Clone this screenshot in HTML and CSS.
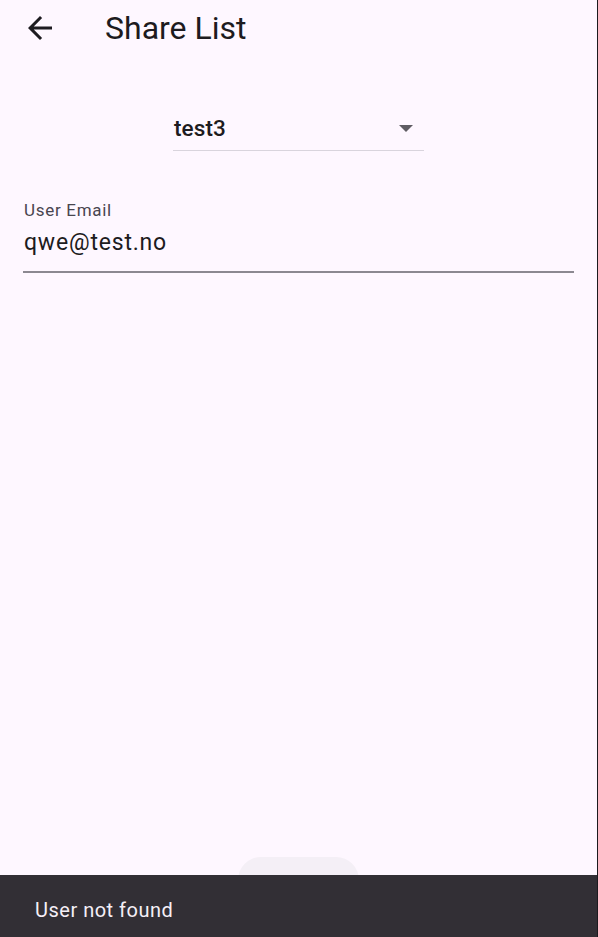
FILE: index.html
```html
<!DOCTYPE html>
<html lang="en">
<head>
<meta charset="utf-8">
<title>Share List</title>
<link rel="stylesheet" href="styles.css">
</head>
<body>
<div class="screen">
  <header class="appbar">
    <button class="back" aria-label="Back">
      <svg viewBox="0 0 24 24" width="36" height="36"><path d="M20 11H7.83l5.59-5.59L12 4l-8 8 8 8 1.41-1.41L7.83 13H20v-2z" fill="#1d1b20"/></svg>
    </button>
    <h1 class="title">Share List</h1>
  </header>
  <main class="content">
    <div class="dropdown-row">
      <div class="dropdown">
        <span class="dropdown-value">test3</span>
        <span class="caret"></span>
      </div>
    </div>
    <div class="field">
      <label class="field-label">User Email</label>
      <div class="field-value">qwe@test.no</div>
    </div>
  </main>
  <div class="fab"></div>
  <div class="snackbar">User not found</div>
</div>
</body>
</html>
```
FILE: styles.css
```css
html, body {
  margin: 0;
  padding: 0;
  background: #1c1b1f;
}
body {
  width: 598px;
  height: 937px;
  overflow: hidden;
  font-family: Roboto, "Noto Sans", sans-serif;
}
.screen {
  position: relative;
  width: 597px;
  height: 937px;
  background: #fef7ff;
  display: flex;
  flex-direction: column;
  overflow: hidden;
}
.appbar {
  display: flex;
  align-items: center;
  height: 56px;
  padding-left: 22px;
}
.back {
  border: 0;
  background: none;
  padding: 0;
  width: 36px;
  height: 36px;
  display: flex;
}
.title {
  margin: 0 0 0 47px;
  font-size: 32px;
  font-weight: 400;
  color: #1d1b20;
  line-height: 40px;
}
.content {
  flex: 1;
  display: flex;
  flex-direction: column;
  padding: 0 23px;
}
.dropdown-row {
  display: flex;
  justify-content: center;
  margin-top: 44px;
}
.dropdown {
  width: 251px;
  height: 51px;
  box-sizing: border-box;
  border-bottom: 1px solid #d9d4dd;
  display: flex;
  align-items: center;
  justify-content: space-between;
  padding: 6px 11px 0 1px;
}
.dropdown-value {
  font-size: 22.5px;
  font-weight: 500;
  color: #1d1b20;
  letter-spacing: 0.1px;
}
.caret {
  width: 0;
  height: 0;
  border-left: 7.5px solid transparent;
  border-right: 7.5px solid transparent;
  border-top: 7.5px solid #5f5c63;
}
.field {
  margin-top: 49px;
  border-bottom: 2px solid #8c8891;
  padding-bottom: 14px;
  padding-left: 1px;
}
.field-label {
  display: block;
  font-size: 17px;
  color: #49454f;
  line-height: 20px;
  letter-spacing: 0.7px;
}
.field-value {
  margin-top: 9px;
  font-size: 23px;
  color: #1d1b20;
  line-height: 28px;
  letter-spacing: 0.8px;
}
.fab {
  position: absolute;
  left: 238px;
  top: 857px;
  width: 121px;
  height: 80px;
  border-radius: 23px;
  background: #f4eff6;
}
.snackbar {
  position: absolute;
  left: 0;
  right: 0;
  bottom: 0;
  height: 62px;
  box-sizing: border-box;
  padding: 7px 0 0 35px;
  background: #322f35;
  color: #f5eff7;
  font-size: 20px;
  letter-spacing: 0.5px;
  display: flex;
  align-items: center;
}
```
